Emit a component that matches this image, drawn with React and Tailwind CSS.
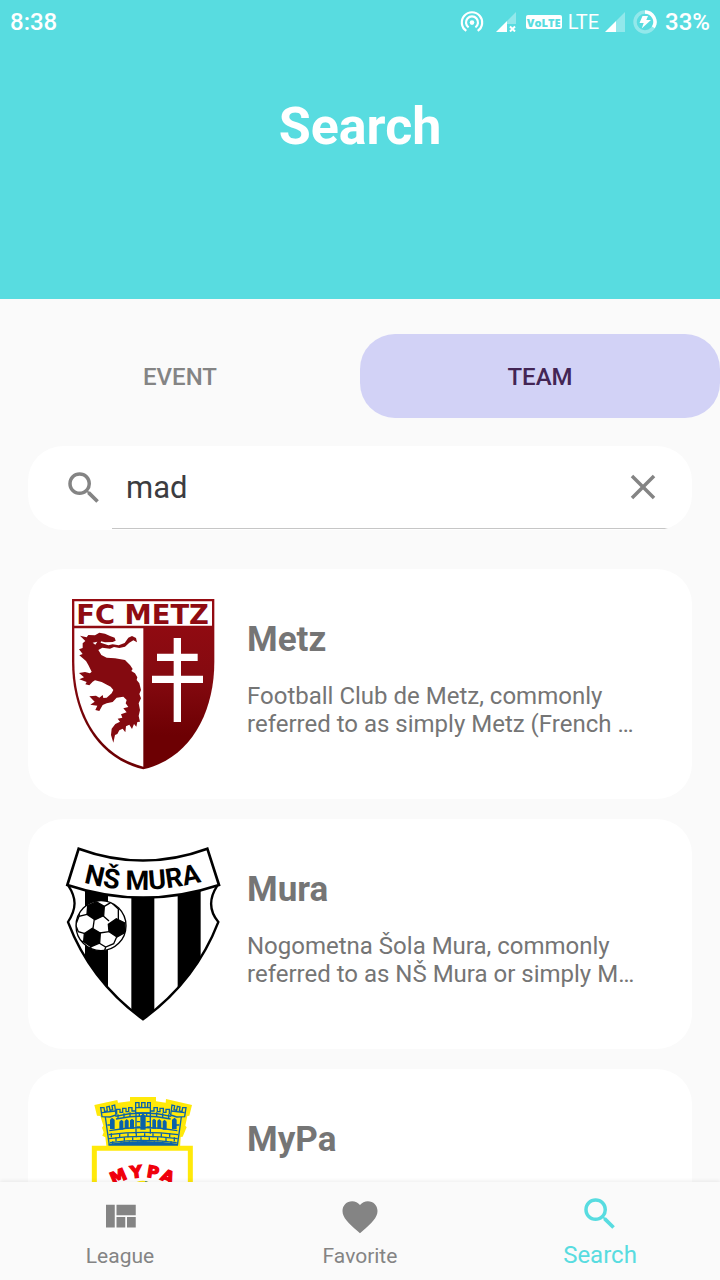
import React, { useState } from "react";
import { MdSearch, MdClose, MdFavorite } from "react-icons/md";

function SignalIcon({ noData }) {
  return (
    <svg viewBox="0 0 20 20" className="size-5 shrink-0" aria-hidden="true">
      <path d={noData ? "M20 0V12H11V9Z" : "M20 0V20H11V9Z"} fill="#fff" opacity=".35" />
      <path d="M11 9V20H0Z" fill="#fff" />
      {noData && <path d="M14 14.5L19 19.5M19 14.5L14 19.5" stroke="#fff" strokeWidth="2" />}
    </svg>
  );
}

function StatusBar() {
  return (
    <div className="flex h-11 items-center px-2.5 text-2xl font-medium text-white">
      <span className="flex-1">8:38</span>
      <svg viewBox="0 0 24 24" className="mr-3 size-6" fill="none" stroke="#fff" strokeWidth="2.2" aria-hidden="true">
        <path d="M6.3 20.9A10.2 10.2 0 1 1 17.7 20.9" />
        <path d="M8.6 17.4A6 6 0 1 1 15.4 17.4" />
        <circle cx="12" cy="12.6" r="2.3" fill="#fff" stroke="none" />
      </svg>
      <SignalIcon noData />
      <span className="ml-2.5 flex h-3.5 w-9 items-center justify-center rounded-xs bg-white font-['Open_Sans'] text-[11px] leading-none font-extrabold text-[#58dce0]">
        VoLTE
      </span>
      <span className="mx-1.5 text-[20px] font-normal">LTE</span>
      <SignalIcon />
      <svg viewBox="0 0 24 24" className="mx-2 size-6" aria-hidden="true">
        <circle cx="12" cy="12" r="10" fill="none" stroke="#fff" strokeWidth="3.4" opacity=".35" />
        <path d="M12 2A10 10 0 0 1 20.4 17.4" fill="none" stroke="#fff" strokeWidth="3.4" />
        <path d="M9.5 6H15L13.3 10H18L8.7 18.5L10.7 13H6.5Z" fill="#fff" />
      </svg>
      <span>33%</span>
    </div>
  );
}

function MetzCrest() {
  return (
    <svg viewBox="-12 -15 513 594" className="h-[198px] w-[171px] shrink-0" role="img" aria-label="Metz crest">
      <defs>
        <linearGradient id="metz" x1="0" y1="0" x2="0" y2="1">
          <stop offset="0" stopColor="#960b12" />
          <stop offset=".45" stopColor="#850a10" />
          <stop offset=".8" stopColor="#6d0003" />
          <stop offset="1" stopColor="#6d0003" />
        </linearGradient>
      </defs>
      <path d="M36 27H463V215C463 370 390 505 250 538C110 505 36 370 36 215Z" fill="url(#metz)" />
      <path d="M43 34H456V107H43Z" fill="#fff" />
      <path d="M43 115H250V530C112 495 43 365 43 215Z" fill="#fff" />
      <text x="49" y="101" fontFamily="DejaVu Sans, sans-serif" fontWeight="700" fontSize="82" fill="#8f0b12">FC METZ</text>
      <path d="M341 144H363V191H413V213H363V257H429V279H363V396H341V279H276V257H341V213H291V191H341Z" fill="#fff" />
      <path
        fill="#840a10"
        d="M60 137L80 142L85 135L105 136L118 128L135 131L150 138L164 143L167 152L158 156L135 157L123 154L122 158L145 166L158 163L176 166L194 159L205 143L216 138L228 144L231 157L220 151L208 158L195 170L178 174L162 171L150 176L127 173L115 180L124 195L140 203L165 205L195 210L210 225L218 237L214 243L225 250L232 262L230 270L238 280L243 300L238 312L243 325L236 340L240 360L236 378L240 395L232 396L229 410L222 402L216 417L208 404L198 409L196 427L188 416L178 421L172 432L165 435L160 458L153 435L155 416L166 402L180 395L173 386L187 383L183 373L200 367L190 355L205 351L197 340L200 330L190 320L170 323L158 336L140 340L128 345L118 363L106 360L112 347L91 344L104 335L88 319L108 317L118 323L128 315L130 324L140 323L155 310L160 300L152 290L125 276L105 271L98 275L88 286L76 283L80 276L58 268L72 262L57 249L75 246L90 250L95 245L85 225L78 213L58 196L68 192L57 178L68 174L68 160L76 153Z"
      />
      <path d="M98 158L112 155L106 164Z" fill="#fff" />
    </svg>
  );
}

function MuraCrest() {
  return (
    <svg viewBox="3 0 513 594" className="h-[198px] w-[171px] shrink-0" role="img" aria-label="Mura crest">
      <defs>
        <clipPath id="mura-body">
          <path d="M40 152C65 190 65 220 39 261C80 370 150 470 264 553C378 470 448 370 490 261C460 225 462 190 487 152Q264 222 40 152Z" />
        </clipPath>
        <clipPath id="mura-ball"><circle cx="138" cy="272" r="75" /></clipPath>
        <path id="mura-arc" d="M86 143Q264 192 480 130" />
      </defs>
      <g clipPath="url(#mura-body)">
        <path d="M0 130H525V600H0Z" fill="#fff" />
        <path d="M90 130H159V600H90ZM229 130H298V600H229ZM368 130H437V600H368Z" fill="#000" />
      </g>
      <path d="M40 152C65 190 65 220 39 261C80 370 150 470 264 553C378 470 448 370 490 261C460 225 462 190 487 152" fill="none" stroke="#000" strokeWidth="7" />
      <path d="M71 41Q264 112 457 41L492 150Q264 226 37 150Z" fill="#fff" stroke="#000" strokeWidth="8" />
      <text fontFamily="Roboto, sans-serif" fontWeight="700" fontSize="81" fill="#000">
        <textPath href="#mura-arc">NŠ MURA</textPath>
      </text>
      <circle cx="138" cy="272" r="75" fill="#fff" />
      <g clipPath="url(#mura-ball)" stroke="#000" strokeWidth="4">
        <path d="M98 212L124 200L148 214L146 242L120 254L96 238Z" />
        <path d="M88 296L112 280L136 294L134 324L108 335L86 320Z" />
        <path d="M160 268L184 251L209 264L211 292L186 306L162 290Z" />
        <path d="M96 238L72 244L62 270L70 290L90 296M118 252L114 280M144 242L162 258M134 294L162 290M132 324L152 336L176 326L186 304M148 214L168 202L190 222L190 254M152 336L148 350M108 334L104 350M88 320L70 318M72 244L74 225M168 202L160 190" fill="none" />
      </g>
      <circle cx="138" cy="272" r="75" fill="none" stroke="#000" strokeWidth="4" />
    </svg>
  );
}

const BRICK_ROWS = [
  { y: 143, left: 86, count: 8, shift: 0 },
  { y: 155, left: 87, count: 8, shift: 13 },
  { y: 167, left: 90, count: 8, shift: 0 },
];

function MyPaCrest() {
  return (
    <svg viewBox="-72 0 513 594" className="h-[198px] w-[171px] shrink-0" role="img" aria-label="MyPa crest">
      <path d="M43 60L112 45L114 53L150 49V36H228V49L257 53L258 42L336 60L328 92L322 93L316 122L320 127L308 155L302 156L300 190H80L76 157L67 152L71 142L66 128L70 122L61 93L51 92Z" fill="#ffe90a" />
      <g fill="none" stroke="#0a62a8" strokeWidth="4">
        <path d="M62 68L66 95L90 96L108 90L104 60L96 62L98 74L90 76L88 64L80 66L82 78L74 80L72 68Z" />
        <path d="M318 68L314 95L290 96L272 90L276 60L284 62L282 74L290 76L292 64L300 66L298 78L306 80L308 68Z" />
        <path d="M167 84V53H177V67H185V53H195V67H203V53H211V84ZM167 68H211" />
        <path d="M110 88V73H120V82H128V70H138V80H146V68H156V78H167M268 88V73H258V82H250V70H240V80H232V68H222V78H211" />
        <path d="M66 83L106 78M314 83L274 78M106 94Q190 74 274 94M108 102Q190 84 272 102" />
        <path d="M76 96L88 182M304 96L292 182M168 84V146M211 84V146M88 137Q190 118 292 137" />
        {BRICK_ROWS.map((row) => (
          <path key={row.y} d={`M${row.left} ${row.y + 6}Q190 ${row.y - 8} ${380 - row.left} ${row.y + 6}`} />
        ))}
        {BRICK_ROWS.flatMap((row) =>
          Array.from({ length: row.count }, (_, i) => (
            <path key={`${row.y}-${i}`} d={`M${row.left + 8 + row.shift + i * 25} ${row.y + 2}V${row.y + 14}`} />
          ))
        )}
        <path d="M114 88V101M132 85V98M150 82V96M230 82V96M248 85V98M266 88V101M178 84V94M200 84V94M82 120H92M298 120H288M170 110H180M200 110H210M170 126H180M200 126H210" />
      </g>
      <path d="M90 104L96 98L104 104V132H90ZM118 110L124 104L130 109V134H118ZM134 108L140 102L146 107V132H134ZM150 106L156 101L162 106V131H150ZM181 94L189 85L197 94V134H181ZM217 106L222 101L228 106V131H217ZM232 107L238 102L244 108V132H232ZM248 109L254 104L260 110V134H248ZM276 104L284 98L290 104V132H276Z" fill="#0a62a8" />
      <path d="M86 176Q190 160 294 176V183H86Z" fill="#0a62a8" />
      <path d="M43 190H331V580H43Z" fill="#fff" stroke="#ffe90a" strokeWidth="15" />
      <g fontFamily="DejaVu Sans, sans-serif" fontWeight="700" fontSize="49" fill="#f0000b" stroke="#f0000b" strokeWidth="4">
        <text transform="translate(99 299) rotate(-23)">M</text>
        <text transform="translate(153 280) rotate(-7)">Y</text>
        <text transform="translate(199 275) rotate(9)">P</text>
        <text transform="translate(239 283) rotate(23)">A</text>
      </g>
      <circle cx="188" cy="330" r="43" fill="#ffe90a" />
      <path d="M196 288Q232 300 231 330H196Z" fill="#0a62a8" />
    </svg>
  );
}

const TEAMS = [
  { name: "Metz", Crest: MetzCrest, text: "Football Club de Metz, commonly referred to as simply Metz (French …" },
  { name: "Mura", Crest: MuraCrest, text: "Nogometna Šola Mura, commonly referred to as NŠ Mura or simply M…" },
  { name: "MyPa", Crest: MyPaCrest, text: "" },
];

function TeamCard({ name, Crest, text }) {
  return (
    <li className="flex h-[230px] shrink-0 gap-5 rounded-[35px] bg-white py-4 pr-9 pl-7">
      <Crest />
      <div className="min-w-0 flex-1 pt-[34px]">
        <h2 className="text-[35px] leading-[42px] font-bold text-[#757575]">{name}</h2>
        <p className="mt-[21px] text-[24px] leading-7 text-[#757575]">{text}</p>
      </div>
    </li>
  );
}

function QuiltIcon({ className }) {
  return (
    <svg viewBox="0 0 24 24" fill="currentColor" className={className} aria-hidden="true">
      <path d="M10 18h5v-6h-5v6zm-6 0h5V5H4v13zm12 0h5v-6h-5v6zM10 5v6h11V5H10z" />
    </svg>
  );
}

function BottomNav() {
  return (
    <nav className="relative z-10 flex h-[98px] shrink-0 bg-[#fafafa] text-[#848484] shadow-[0_-1px_4px_rgba(0,0,0,0.08)]">
      <a href="#league" className="flex flex-1 flex-col items-center pt-3.5 text-[21px] leading-7">
        <QuiltIcon className="size-[42px]" />
        <span className="mt-1">League</span>
      </a>
      <a href="#favorite" className="flex flex-1 flex-col items-center pt-3.5 text-[21px] leading-7">
        <MdFavorite className="size-[42px]" />
        <span className="mt-1">Favorite</span>
      </a>
      <a href="#search" aria-current="page" className="flex flex-1 flex-col items-center pt-[11px] text-2xl leading-7 text-[#58dce0]">
        <MdSearch className="size-[42px]" />
        <span className="mt-1.5">Search</span>
      </a>
    </nav>
  );
}

export default function App() {
  const [query, setQuery] = useState("mad");
  const [tab, setTab] = useState("TEAM");
  return (
    <div className="flex h-screen flex-col overflow-hidden bg-[#fafafa] font-[Roboto,sans-serif]">
      <header className="h-[299px] shrink-0 bg-[#58dce0]">
        <StatusBar />
        <h1 className="pt-[51px] text-center text-[52px] leading-[64px] font-bold text-white">Search</h1>
      </header>
      <main className="flex min-h-0 flex-1 flex-col overflow-hidden">
        <div role="tablist" className="mt-[35px] flex shrink-0">
          {["EVENT", "TEAM"].map((name) => (
            <button
              key={name}
              role="tab"
              aria-selected={tab === name}
              onClick={() => setTab(name)}
              className={
                tab === name
                  ? "h-[84px] flex-1 rounded-[35px] bg-[#d2d2f6] pt-0.5 text-2xl font-medium text-[#432554]"
                  : "h-[84px] flex-1 rounded-[35px] pt-0.5 text-2xl font-medium text-[#848484]"
              }
            >
              {name}
            </button>
          ))}
        </div>
        <form className="mx-7 mt-7 flex h-[84px] shrink-0 overflow-hidden rounded-[35px] bg-white text-[#848484]" onSubmit={(e) => e.preventDefault()}>
          <label htmlFor="query" aria-label="Search teams" className="flex w-[84px] items-center justify-end pr-[7px]">
            <MdSearch className="size-[42px]" />
          </label>
          <div className="mb-px flex min-w-0 flex-1 items-center border-b border-[#c6c6c6] pr-7 pl-3.5">
            <input
              id="query"
              value={query}
              onChange={(e) => setQuery(e.target.value)}
              className="h-full min-w-0 flex-1 bg-transparent text-[31px] text-[#3c3c40] outline-none"
            />
            <button type="button" aria-label="Clear" onClick={() => setQuery("")}>
              <MdClose className="size-[42px]" />
            </button>
          </div>
        </form>
        <ul className="mx-7 mt-[39px] flex flex-col gap-5">
          {TEAMS.map((team) => (
            <TeamCard key={team.name} {...team} />
          ))}
        </ul>
      </main>
      <BottomNav />
    </div>
  );
}
